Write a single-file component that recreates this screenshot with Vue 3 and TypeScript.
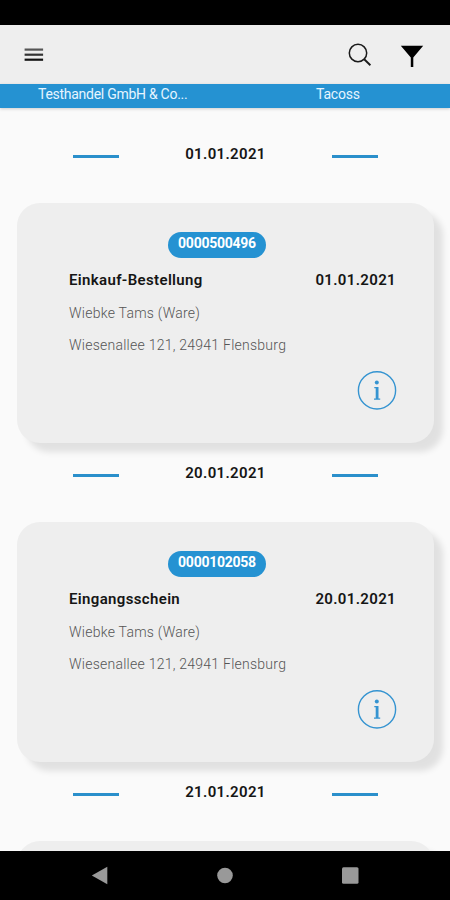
<script setup lang="ts">
interface Receipt {
  id: number
  day: string
  code: string
  title: string
  contact: string
  address: string
}

const receipts: Receipt[] = [
  {
    id: 1,
    day: '01.01.2021',
    code: '0000500496',
    title: 'Einkauf-Bestellung',
    contact: 'Wiebke Tams (Ware)',
    address: 'Wiesenallee 121, 24941 Flensburg',
  },
  {
    id: 2,
    day: '20.01.2021',
    code: '0000102058',
    title: 'Eingangsschein',
    contact: 'Wiebke Tams (Ware)',
    address: 'Wiesenallee 121, 24941 Flensburg',
  },
]
const nextDay = '21.01.2021'
</script>

<template>
  <div class="screen">
    <div class="status-bar"></div>
    <header class="toolbar">
      <svg class="menu-icon" width="20" height="16" viewBox="0 0 20 16">
        <path d="M.6 2.600H19.100" stroke="#555" stroke-width="2.200" />
        <path d="M.6 7.700H19.100" stroke="#333" stroke-width="2.200" />
        <path d="M.6 12.700H19.100" stroke="#111" stroke-width="2.200" />
      </svg>
      <div class="actions">
        <svg width="24" height="24" viewBox="0 0 24 24" fill="none" stroke="#1a1a1a">
          <circle cx="10" cy="10" r="8.700" stroke-width="1.500" />
          <path d="M16.200 16.200L22.400 22.200" stroke-width="1.900" />
        </svg>
        <svg width="24" height="24" viewBox="0 0 24 24">
          <path d="M.8 2.800H23.200L13.300 14.600V24H10.800V14.600Z" fill="#000" />
        </svg>
      </div>
    </header>
    <div class="company-bar">
      <span class="company">Testhandel GmbH &amp; Co...</span>
      <span class="vendor">Tacoss</span>
    </div>
    <main class="list">
      <section v-for="item in receipts" :key="item.id">
        <div class="day">
          <i class="dash"></i><span>{{ item.day }}</span><i class="dash"></i>
        </div>
        <article class="card">
          <div class="badge">{{ item.code }}</div>
          <div class="heading">
            <span class="title">{{ item.title }}</span>
            <span class="date">{{ item.day }}</span>
          </div>
          <p class="contact">{{ item.contact }}</p>
          <p class="address">{{ item.address }}</p>
          <svg class="info" width="40" height="40" viewBox="0 0 40 40">
            <circle cx="20" cy="19.400" r="18.600" fill="none" stroke="#3594d1" stroke-width="1.400" />
            <circle cx="19.800" cy="11.600" r="2" fill="#3594d1" />
            <path d="M17.300 16H21.500V27.400H23.200V28.700H17V27.400H18.700V17.300H17.300Z" fill="#3594d1" />
          </svg>
        </article>
      </section>
      <section>
        <div class="day">
          <i class="dash"></i><span>{{ nextDay }}</span><i class="dash"></i>
        </div>
        <article class="card"></article>
      </section>
    </main>
    <nav class="nav-bar">
      <svg width="18" height="20" viewBox="0 0 18 20"><path d="M.8 9.500L16.300 .8V18.200Z" fill="#999" /></svg>
      <svg width="18" height="20" viewBox="0 0 18 20"><circle cx="9" cy="9.500" r="7.800" fill="#999" /></svg>
      <svg width="18" height="20" viewBox="0 0 18 20"><rect x="1" y="1.300" width="16.500" height="16.500" rx="1.500" fill="#999" /></svg>
    </nav>
  </div>
</template>

<style>
body {
  margin: 0;
  overflow: hidden;
}
</style>

<style scoped>
.screen {
  display: flex;
  flex-direction: column;
  width: 450px;
  height: 900px;
  overflow: hidden;
  background: #fafafa;
  font-family: Roboto, sans-serif;
  color: #151515;
}
svg {
  display: block;
  flex: none;
}
.status-bar {
  flex: none;
  height: 25px;
  background: #000;
}
.toolbar {
  flex: none;
  display: flex;
  align-items: center;
  justify-content: space-between;
  box-sizing: border-box;
  height: 59px;
  padding: 0 26px 0 24px;
  background: #eee;
}
.actions {
  display: flex;
  gap: 28px;
}
.company-bar {
  flex: none;
  display: flex;
  box-sizing: border-box;
  height: 24px;
  padding-left: 38px;
  background: #2592d2;
  box-shadow: 0 1px 3px rgba(0, 0, 0, 0.18);
  color: #e6f5ff;
  font-size: 14px;
  line-height: 20px;
}
.company {
  width: 278px;
  letter-spacing: -0.27px;
}
.vendor {
  letter-spacing: -0.2px;
}
.list {
  flex: 1;
  min-height: 0;
  overflow: hidden;
  padding-top: 16px;
}
.day {
  display: grid;
  grid-template-columns: 46px 1fr 46px;
  align-items: center;
  height: 60px;
  padding: 0 72px 19px 73px;
  font-size: 15px;
  font-weight: 600;
  letter-spacing: 0.35px;
  text-align: center;
}
.dash {
  height: 3px;
  margin-top: 5px;
  background: #2a8fcb;
}
.card {
  box-sizing: border-box;
  width: 417px;
  height: 240px;
  margin-left: 17px;
  padding: 29px 38px 0 52px;
  border-radius: 23px;
  background: #eee;
  box-shadow: 9px 9px 6px rgba(0, 0, 0, 0.1);
}
.badge {
  box-sizing: border-box;
  width: 98px;
  height: 26px;
  margin-left: 99px;
  border-radius: 13px;
  background: #2592d2;
  color: #fff;
  font-size: 14px;
  font-weight: 700;
  letter-spacing: -0.25px;
  line-height: 23px;
  text-align: center;
}
.heading {
  display: flex;
  justify-content: space-between;
  margin-top: 12px;
  font-size: 15px;
  font-weight: 600;
  line-height: 20px;
}
.title {
  letter-spacing: 0.35px;
}
.date {
  letter-spacing: 0.35px;
}
p {
  margin: 13px 0 0;
  color: #555;
  font-size: 14px;
  font-weight: 300;
  letter-spacing: 0.25px;
  line-height: 20px;
}
.address {
  margin-top: 12px;
}
.info {
  margin: 16px -1px 0 auto;
}
.nav-bar {
  flex: none;
  display: flex;
  align-items: center;
  justify-content: center;
  gap: 107px;
  height: 49px;
  background: #000;
}
</style>
